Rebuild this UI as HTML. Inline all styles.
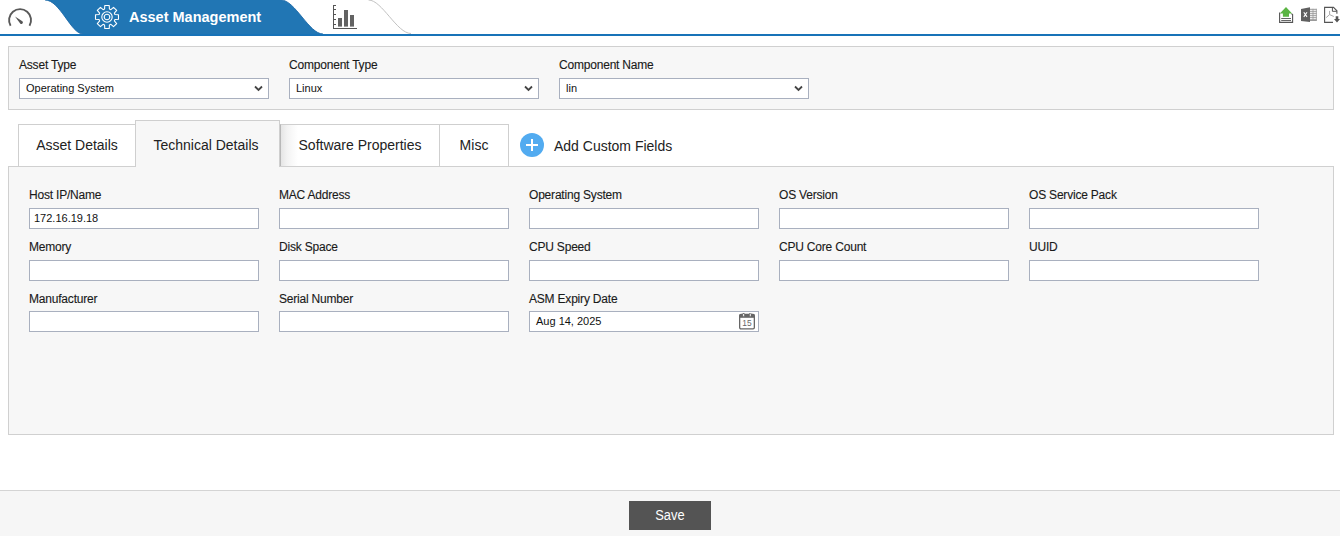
<!DOCTYPE html>
<html><head><meta charset="utf-8">
<style>
*{box-sizing:border-box;margin:0;padding:0}
html,body{width:1340px;height:536px;overflow:hidden;background:#fff;font-family:"Liberation Sans",sans-serif;color:#222}
.abs{position:absolute}
#hdr{position:absolute;left:0;top:0;width:1340px;height:36px}
#bl{position:absolute;left:0;top:34px;width:1340px;height:2px;background:#1b6aae}
.lbl{position:absolute;font-size:12px;color:#1a1a1a;white-space:nowrap;line-height:14px;letter-spacing:-0.2px;-webkit-text-stroke:0.12px #1a1a1a}
.sel{position:absolute;height:21px;width:250px;background:#fff;border:1px solid #a9b0bf;font-size:11px;line-height:19px;padding-left:6px;color:#111}
.sel svg{position:absolute;right:5px;top:6px}
.inp{position:absolute;height:21px;width:230px;background:#fff;border:1px solid #a9b0bf;font-size:11px;line-height:19px;padding-left:4px;color:#111}
#fp{position:absolute;left:8px;top:46px;width:1326px;height:64px;background:#f7f7f7;border:1px solid #d0d0d0}
#tp{position:absolute;left:8px;top:166px;width:1326px;height:269px;background:#f7f7f7;border:1px solid #d0d0d0}
.tab{position:absolute;top:124px;height:42px;background:#fff;border:1px solid #cfcfcf;border-bottom:none;font-size:14px;line-height:40px;text-align:center;color:#222;white-space:nowrap}
#ft{position:absolute;left:0;top:490px;width:1340px;height:46px;background:#f6f6f6;border-top:1px solid #d4d4d4}
#save{position:absolute;left:629px;top:501px;width:82px;height:29px;background:#545454;color:#fff;font-size:14px;line-height:29px;text-align:center}
</style></head><body>
<div id="hdr">
<svg class="abs" style="left:0;top:0" width="1340" height="36" viewBox="0 0 1340 36">
  <path d="M45 0 L281 0 C295 0 309 34 323 34 L83 34 C71 34 60 0 45 0 Z" fill="#2176b4"/>
  <path d="M83 34 C71 34 60 0 45 0 M281 0 C295 0 309 34 323 34" stroke="#1c69a8" stroke-width="0.9" fill="none"/>
  <path d="M368.5 0 C382 0 397 33.5 411 33.5" stroke="#c2c2c2" stroke-width="1" fill="none"/>
  <rect x="0" y="34" width="1340" height="2" fill="#1873b8"/>
  <!-- speedometer -->
  <path d="M10.6 25.8 A11 11 0 1 1 29.5 25.8" stroke="#595959" stroke-width="1.9" fill="none"/>
  <path d="M15 16.4 L22.39 21.23 A1.6 1.6 0 0 1 20.2 23.57 Z" fill="#555"/>
  <!-- gear -->
  <g transform="translate(107 17)" stroke="#fff" stroke-width="1.1" fill="none">
    <path d="M-2.43 -7.94 L-2.23 -11.49 L2.23 -11.49 L2.43 -7.94 L3.90 -7.33 L6.54 -9.70 L9.70 -6.54 L7.33 -3.90 L7.94 -2.43 L11.49 -2.23 L11.49 2.23 L7.94 2.43 L7.33 3.90 L9.70 6.54 L6.54 9.70 L3.90 7.33 L2.43 7.94 L2.23 11.49 L-2.23 11.49 L-2.43 7.94 L-3.90 7.33 L-6.54 9.70 L-9.70 6.54 L-7.33 3.90 L-7.94 2.43 L-11.49 2.23 L-11.49 -2.23 L-7.94 -2.43 L-7.33 -3.90 L-9.70 -6.54 L-6.54 -9.70 L-3.90 -7.33 Z" stroke-linejoin="round"/>
    <circle r="5.2"/>
    <circle r="2.8"/>
  </g>
  <!-- chart -->
  <g fill="#555">
    <rect x="333" y="5" width="1" height="24"/>
    <rect x="333" y="28" width="24" height="1"/>
    <rect x="333" y="5" width="3" height="1"/>
    <rect x="333" y="9" width="3" height="1"/>
    <rect x="333" y="14" width="3" height="1"/>
    <rect x="333" y="19" width="3" height="1"/>
    <rect x="333" y="24" width="3" height="1"/>
  </g>
  <g fill="#636363">
    <rect x="338" y="18" width="4" height="8.6"/>
    <rect x="344" y="10" width="4" height="16.6"/>
    <rect x="350" y="15" width="4" height="11.6"/>
  </g>
</svg>

<svg class="abs" style="left:1270px;top:0" width="70" height="30" viewBox="0 0 70 30">
  <path d="M9.6 12.5 V22.4 H22.6 V14.6 L21.4 13.6" stroke="#555" stroke-width="1.1" fill="none"/>
  <rect x="11.2" y="18" width="9.8" height="0.9" fill="#555"/>
  <rect x="11.2" y="20" width="9.8" height="0.9" fill="#555"/>
  <path d="M16 7 L22.1 13.6 L19 13.6 L19 16.7 L12.9 16.7 L12.9 13.6 L9.8 13.6 Z" fill="#5bb544"/>
  <path d="M31 9 L40 7.3 L40 22.1 L31 21 Z" fill="#606060"/>
  <path d="M33.8 12.3 L37 16.9 M37 12.3 L33.8 16.9" stroke="#fff" stroke-width="1.1"/>
  <g fill="#9a9a9a">
    <rect x="40" y="8.8" width="6.7" height="1"/>
    <rect x="40" y="10.8" width="6.7" height="1"/>
    <rect x="40" y="12.8" width="6.7" height="1"/>
    <rect x="40" y="14.8" width="6.7" height="1"/>
    <rect x="40" y="16.8" width="6.7" height="1"/>
    <rect x="40" y="18.8" width="6.7" height="1"/>
    <rect x="40" y="20.0" width="6.7" height="1"/>
    <rect x="42.6" y="8.8" width="0.8" height="12"/>
    <rect x="45.9" y="8.8" width="0.8" height="12"/>
  </g>
  <path d="M63 22.4 H54.6 V7.4 H63.5 L66.9 10.8 V13.7" stroke="#555" stroke-width="1.1" fill="none"/>
  <path d="M62.4 7.4 V11.3 H66.9" stroke="#555" stroke-width="1" fill="none"/>
  <path d="M59.6 10.9 V14.6 L56.2 17.6 M59.6 14.6 L63.8 16.5" stroke="#aaa" stroke-width="1" fill="none"/>
  <path d="M65.7 16.2 H68.3 V19 H70 L67 22.4 L64 19 H65.7 Z" fill="#555"/>
</svg>
<div class="abs" style="left:129px;top:8px;font-size:14.5px;font-weight:bold;color:#fff;line-height:18px;white-space:nowrap">Asset Management</div>
</div>

<div id="fp"></div>
<div class="lbl" style="left:19px;top:58px">Asset Type</div>
<div class="sel" style="left:19px;top:78px">Operating System<svg width="9" height="7" viewBox="0 0 9 7"><path d="M1 1.5 L4.5 5 L8 1.5" stroke="#444" stroke-width="1.8" fill="none"/></svg></div>
<div class="lbl" style="left:289px;top:58px">Component Type</div>
<div class="sel" style="left:289px;top:78px">Linux<svg width="9" height="7" viewBox="0 0 9 7"><path d="M1 1.5 L4.5 5 L8 1.5" stroke="#444" stroke-width="1.8" fill="none"/></svg></div>
<div class="lbl" style="left:559px;top:58px">Component Name</div>
<div class="sel" style="left:559px;top:78px">lin<svg width="9" height="7" viewBox="0 0 9 7"><path d="M1 1.5 L4.5 5 L8 1.5" stroke="#444" stroke-width="1.8" fill="none"/></svg></div>

<div id="tp"></div>
<div class="tab" style="left:18px;width:118px">Asset Details</div>
<div class="tab" style="left:135px;top:120px;width:145px;height:47px;background:#f7f7f7;line-height:48px;padding-right:3px">Technical Details</div>
<div class="tab" style="left:280px;width:160px;border-left-color:#b8b8b8;background:linear-gradient(to right,#e5e5e5 0,#f3f3f3 6px,#fff 17px)">Software Properties</div>
<div class="tab" style="left:439px;width:70px">Misc</div>

<div class="lbl" style="left:29px;top:188px">Host IP/Name</div>
<div class="inp" style="left:29px;top:208px">172.16.19.18</div>
<div class="lbl" style="left:279px;top:188px">MAC Address</div>
<div class="inp" style="left:279px;top:208px"></div>
<div class="lbl" style="left:529px;top:188px">Operating System</div>
<div class="inp" style="left:529px;top:208px"></div>
<div class="lbl" style="left:779px;top:188px">OS Version</div>
<div class="inp" style="left:779px;top:208px"></div>
<div class="lbl" style="left:1029px;top:188px">OS Service Pack</div>
<div class="inp" style="left:1029px;top:208px"></div>
<div class="lbl" style="left:29px;top:240px">Memory</div>
<div class="inp" style="left:29px;top:260px"></div>
<div class="lbl" style="left:279px;top:240px">Disk Space</div>
<div class="inp" style="left:279px;top:260px"></div>
<div class="lbl" style="left:529px;top:240px">CPU Speed</div>
<div class="inp" style="left:529px;top:260px"></div>
<div class="lbl" style="left:779px;top:240px">CPU Core Count</div>
<div class="inp" style="left:779px;top:260px"></div>
<div class="lbl" style="left:1029px;top:240px">UUID</div>
<div class="inp" style="left:1029px;top:260px"></div>
<div class="lbl" style="left:29px;top:292px">Manufacturer</div>
<div class="inp" style="left:29px;top:311px"></div>
<div class="lbl" style="left:279px;top:292px">Serial Number</div>
<div class="inp" style="left:279px;top:311px"></div>
<div class="lbl" style="left:529px;top:292px">ASM Expiry Date</div>
<div class="inp" style="left:529px;top:311px;padding-left:6px">Aug 14, 2025<svg style="position:absolute;left:209px;top:1px" width="17" height="17" viewBox="0 0 17 17"><rect x="0.65" y="1.4" width="14.7" height="14.4" rx="1.3" stroke="#666" stroke-width="1.3" fill="none"/><rect x="0.65" y="1.4" width="14.7" height="3.4" fill="#666"/><rect x="3.9" y="0.2" width="1.4" height="3.2" fill="#fff" stroke="#666" stroke-width="0.5"/><rect x="10.6" y="0.2" width="1.4" height="3.2" fill="#fff" stroke="#666" stroke-width="0.5"/><text x="8" y="12.8" font-size="8.4" text-anchor="middle" fill="#666" font-family="Liberation Sans">15</text></svg></div>
<svg class="abs" style="left:520px;top:133px" width="24" height="24" viewBox="0 0 24 24"><circle cx="12" cy="12" r="12" fill="#52abf0"/><rect x="6" y="11" width="12" height="2" fill="#fff"/><rect x="11" y="6" width="2" height="12" fill="#fff"/></svg>
<div class="abs" style="left:554px;top:138px;font-size:14px;line-height:16px;color:#222;white-space:nowrap">Add Custom Fields</div>
<div id="ft"></div>
<div id="save"><span style="display:inline-block;transform:scaleX(0.92)">Save</span></div>
</body></html>
